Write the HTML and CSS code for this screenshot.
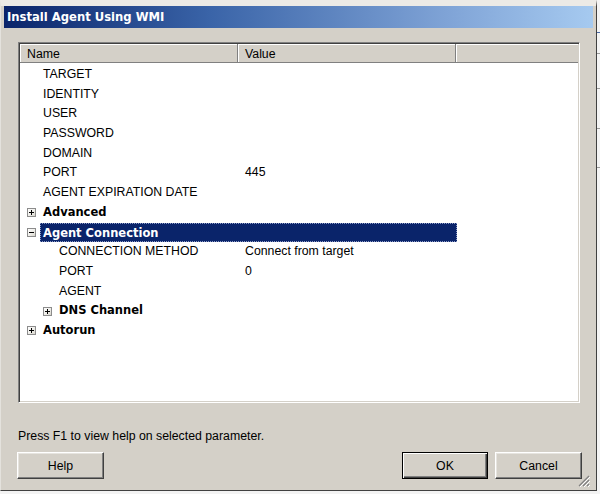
FILE: index.html
```html
<!DOCTYPE html>
<html>
<head>
<meta charset="utf-8">
<title>Install Agent Using WMI</title>
<link rel="stylesheet" href="styles.css">
</head>
<body>
<div class="screen">
  <div class="window">
    <div class="titlebar">Install Agent Using WMI</div>
    <div class="body">
      <div class="panel">
        <div class="header">
          <div class="hcell hname">Name</div>
          <div class="hcell hvalue">Value</div>
          <div class="hcell hfill"></div>
        </div>
        <div class="tree">
          <div class="row"><div class="name l0"><span class="slot"></span><span class="label">TARGET</span></div><div class="value"></div></div>
          <div class="row"><div class="name l0"><span class="slot"></span><span class="label">IDENTITY</span></div><div class="value"></div></div>
          <div class="row"><div class="name l0"><span class="slot"></span><span class="label">USER</span></div><div class="value"></div></div>
          <div class="row"><div class="name l0"><span class="slot"></span><span class="label">PASSWORD</span></div><div class="value"></div></div>
          <div class="row"><div class="name l0"><span class="slot"></span><span class="label">DOMAIN</span></div><div class="value"></div></div>
          <div class="row"><div class="name l0"><span class="slot"></span><span class="label">PORT</span></div><div class="value">445</div></div>
          <div class="row"><div class="name l0"><span class="slot"></span><span class="label">AGENT EXPIRATION DATE</span></div><div class="value"></div></div>
          <div class="row group"><div class="name l0"><span class="slot"><span class="exp plus"></span></span><span class="label">Advanced</span></div><div class="value"></div></div>
          <div class="row group selected"><div class="name l0"><span class="slot"><span class="exp minus"></span></span><span class="label">Agent Connection</span></div></div>
          <div class="row"><div class="name l1"><span class="slot"></span><span class="label">CONNECTION METHOD</span></div><div class="value">Connect from target</div></div>
          <div class="row"><div class="name l1"><span class="slot"></span><span class="label">PORT</span></div><div class="value">0</div></div>
          <div class="row"><div class="name l1"><span class="slot"></span><span class="label">AGENT</span></div><div class="value"></div></div>
          <div class="row group"><div class="name l1"><span class="slot"><span class="exp plus"></span></span><span class="label">DNS Channel</span></div><div class="value"></div></div>
          <div class="row group"><div class="name l0"><span class="slot"><span class="exp plus"></span></span><span class="label">Autorun</span></div><div class="value"></div></div>
        </div>
      </div>
      <div class="hint">Press F1 to view help on selected parameter.</div>
      <div class="buttons">
        <button class="btn help">Help</button>
        <div class="spacer"></div>
        <button class="btn default">OK</button>
        <button class="btn">Cancel</button>
      </div>
    </div>
    <svg class="grip" width="12" height="12" viewBox="0 0 12 12">
      <path d="M11 1 L1 11 M11 5 L5 11 M11 9 L9 11" stroke="#808080" stroke-width="1.2" fill="none"/>
      <path d="M12 2 L2 12 M12 6 L6 12 M12 10 L10 12" stroke="#ffffff" stroke-width="1" fill="none"/>
    </svg>
  </div>
  <div class="side">
    <div class="tick blue t1"></div>
    <div class="tick t2"></div>
    <div class="tick t3"></div>
    <div class="tick t4"></div>
    <div class="tick t5"></div>
  </div>
</div>
</body>
</html>
```
FILE: styles.css
```css
html, body {
  margin: 0;
  padding: 0;
}
body {
  width: 600px;
  height: 494px;
  overflow: hidden;
  background: #f3f3f3;
  font-family: "Liberation Sans", Arial, sans-serif;
  font-size: 12.3px;
  color: #000;
}
.screen {
  display: flex;
  width: 600px;
  height: 494px;
}
.window {
  position: relative;
  width: 597px;
  height: 491px;
  box-sizing: border-box;
  flex: none;
  background: #d4d0c8;
  border-top: 6px solid #eceae6;
  border-left: 1px solid #e4e2dd;
  border-right: 1px solid #404040;
  border-bottom: 1px solid #404040;
  padding: 0 3px 0 3px;
  display: flex;
  flex-direction: column;
}
.titlebar {
  height: 22px;
  line-height: 22px;
  background: linear-gradient(to right, #0a246a 0%, #3a64a8 35%, #7fa3d6 75%, #a6caf0 100%);
  color: #fff;
  font-family: "DejaVu Sans", Tahoma, sans-serif;
  font-weight: bold;
  font-size: 11.6px;
  padding-left: 3px;
  white-space: nowrap;
}
.body {
  padding: 14px 13px 0 14px;
  display: flex;
  flex-direction: column;
}
.panel {
  height: 361px;
  box-sizing: border-box;
  background: #fff;
  border: 1px solid;
  border-color: #808080 #ffffff #ffffff #808080;
  box-shadow: inset 1px 1px 0 #404040, inset -1px -1px 0 #d4d0c8;
  padding: 1px;
  display: flex;
  flex-direction: column;
}
.header {
  display: flex;
  height: 19px;
  flex: none;
}
.hcell {
  box-sizing: border-box;
  height: 19px;
  line-height: 18px;
  padding-top: 1px;
  background: #d4d0c8;
  border-right: 1px solid #808080;
  border-bottom: 1px solid #808080;
  box-shadow: inset 1px 1px 0 #ffffff;
  padding-left: 7px;
  white-space: nowrap;
}
.hname { width: 218px; }
.hvalue { width: 218px; }
.hfill { flex: 1; border-right: none; }
.tree {
  display: flex;
  flex-direction: column;
  padding-top: 2px;
}
.row {
  display: grid;
  grid-template-columns: 218px 1fr;
  height: 19.7px;
  line-height: 19.7px;
  white-space: nowrap;
}
.name {
  display: flex;
  align-items: center;
  height: 19.7px;
}
.name.l0 { padding-left: 7px; }
.name.l1 { padding-left: 23px; }
.slot {
  width: 16px;
  flex: none;
  height: 19.7px;
  display: flex;
  align-items: center;
}
.value {
  padding-left: 7px;
}
.group .label {
  font-family: "DejaVu Sans", Tahoma, sans-serif;
  font-weight: bold;
  font-size: 11.5px;
}
.exp {
  position: relative;
  display: block;
  width: 9px;
  height: 9px;
  box-sizing: border-box;
  border: 1px solid #8c8c8c;
  background: linear-gradient(135deg, #ffffff 0%, #ecebe6 60%, #d8d5cc 100%);
  margin-top: 0;
}
.exp::before {
  content: "";
  position: absolute;
  left: 1px;
  top: 3px;
  width: 5px;
  height: 1px;
  background: #000;
}
.exp.plus::after {
  content: "";
  position: absolute;
  left: 3px;
  top: 1px;
  width: 1px;
  height: 5px;
  background: #000;
}
.row.selected .name {
  grid-column: 1 / -1;
}
.row.selected .label {
  display: block;
  box-sizing: border-box;
  width: 417px;
  height: 19.7px;
  line-height: 18px;
  margin-left: -3px;
  padding-left: 2px;
  background: #0a246a;
  color: #fff;
  border: 1px dotted #8d9bc6;
}
.hint {
  margin-top: 26px;
  line-height: 15px;
  white-space: nowrap;
}
.buttons {
  display: flex;
  margin-top: 8px;
  margin-left: -1px;
  margin-right: -2px;
  gap: 7px;
}
.spacer { flex: 1; }
.btn {
  width: 87px;
  height: 27px;
  box-sizing: border-box;
  font-family: "Liberation Sans", Arial, sans-serif;
  font-size: 12.3px;
  color: #000;
  background: #d4d0c8;
  border: 1px solid;
  border-color: #ffffff #404040 #404040 #ffffff;
  box-shadow: inset -1px -1px 0 #808080, inset 1px 1px 0 #e6e4df;
  padding: 0;
  margin: 0;
}
.btn.default {
  width: 86px;
  border: 1px solid #000;
  box-shadow: inset 1px 1px 0 #ffffff, inset -1px -1px 0 #404040, inset -2px -2px 0 #808080;
}
.grip {
  position: absolute;
  right: 6px;
  bottom: 3px;
}
.side {
  flex: 1;
  height: 494px;
  background: #f4f4f4;
  display: flex;
  flex-direction: column;
}
.tick {
  height: 1px;
  background: #9a9a9a;
  flex: none;
}
.tick.blue { background: #4a6aa8; }
.t1 { margin-top: 32px; }
.t2 { margin-top: 20px; }
.t3 { margin-top: 34px; }
.t4 { margin-top: 39px; }
.t5 { margin-top: 38px; }
```
